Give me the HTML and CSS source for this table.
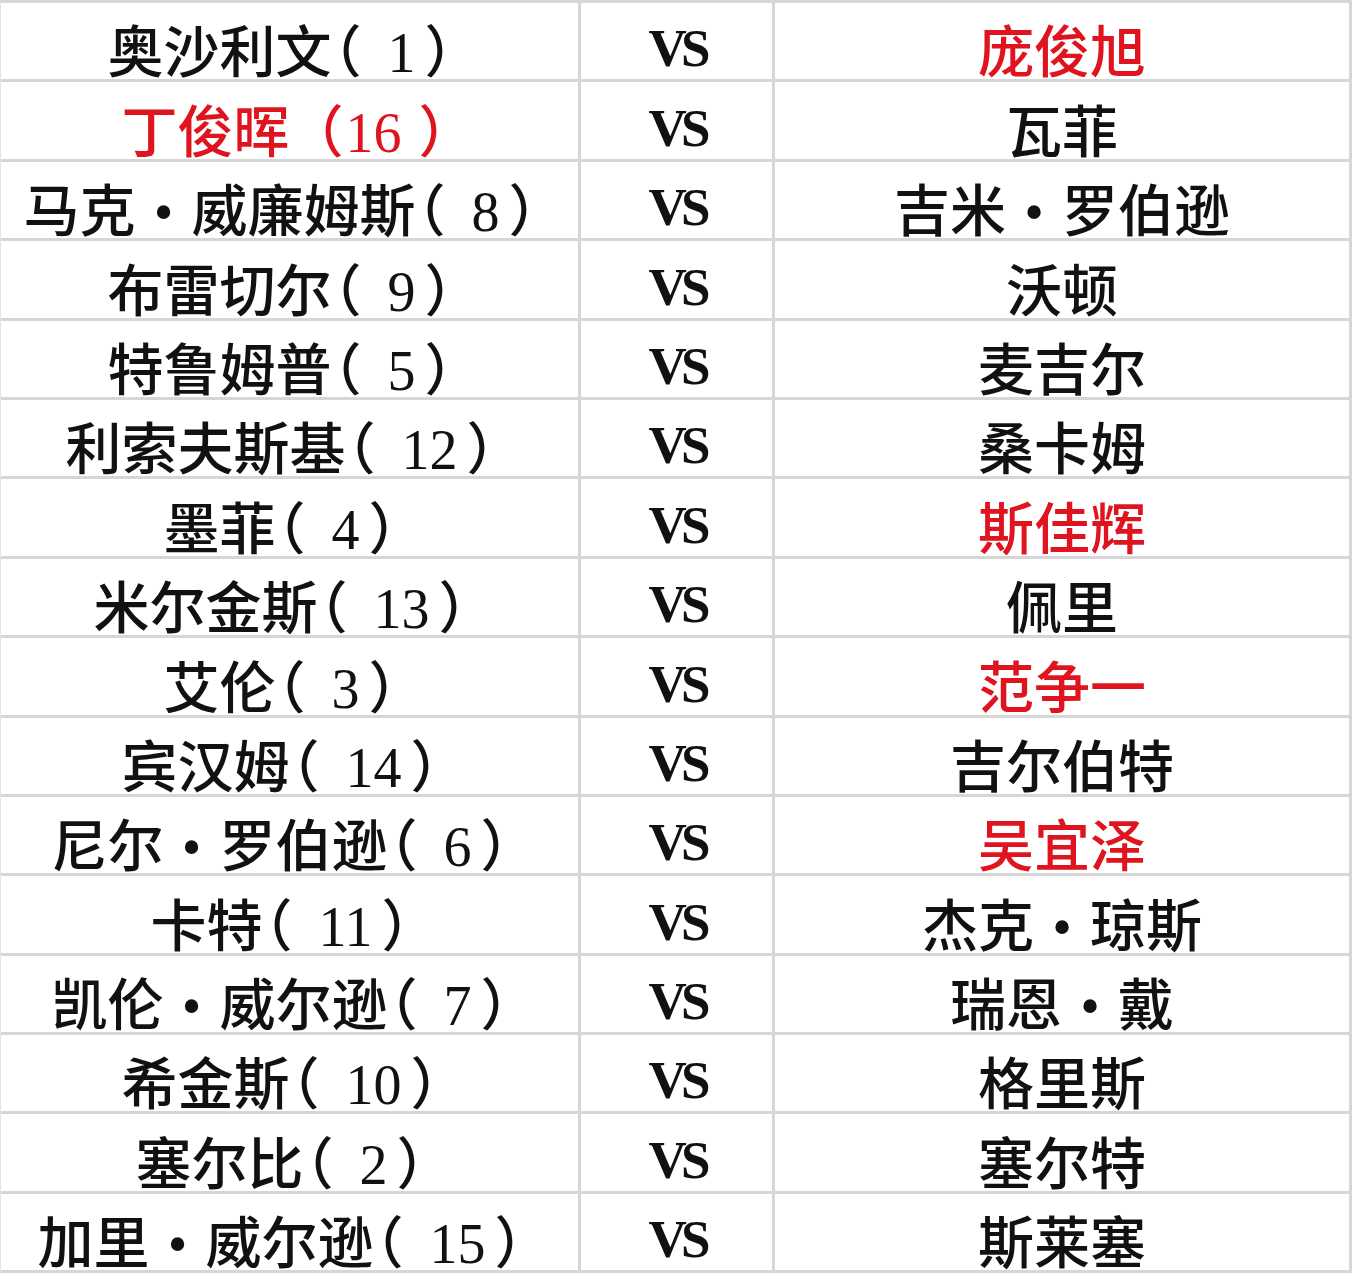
FILE: index.html
```html
<!DOCTYPE html>
<html lang="zh-CN">
<head>
<meta charset="utf-8">
<title>对阵表</title>
<link rel="stylesheet" href="styles.css">
</head>
<body>
<div class="sheet">
  <div class="cell left">奥沙利文<span class="pl">（</span>1<span class="pr">）</span></div><div class="cell mid">VS</div><div class="cell right red">庞俊旭</div>
  <div class="cell left red">丁俊晖<span class="pl alt">（</span>16<span class="pr alt">）</span></div><div class="cell mid">VS</div><div class="cell right">瓦菲</div>
  <div class="cell left">马克<span class="dot">•</span>威廉姆斯<span class="pl">（</span>8<span class="pr">）</span></div><div class="cell mid">VS</div><div class="cell right">吉米<span class="dot">•</span>罗伯逊</div>
  <div class="cell left">布雷切尔<span class="pl">（</span>9<span class="pr">）</span></div><div class="cell mid">VS</div><div class="cell right">沃顿</div>
  <div class="cell left">特鲁姆普<span class="pl">（</span>5<span class="pr">）</span></div><div class="cell mid">VS</div><div class="cell right">麦吉尔</div>
  <div class="cell left">利索夫斯基<span class="pl">（</span>12<span class="pr">）</span></div><div class="cell mid">VS</div><div class="cell right">桑卡姆</div>
  <div class="cell left">墨菲<span class="pl">（</span>4<span class="pr">）</span></div><div class="cell mid">VS</div><div class="cell right red">斯佳辉</div>
  <div class="cell left">米尔金斯<span class="pl">（</span>13<span class="pr">）</span></div><div class="cell mid">VS</div><div class="cell right">佩里</div>
  <div class="cell left">艾伦<span class="pl">（</span>3<span class="pr">）</span></div><div class="cell mid">VS</div><div class="cell right red">范争一</div>
  <div class="cell left">宾汉姆<span class="pl">（</span>14<span class="pr">）</span></div><div class="cell mid">VS</div><div class="cell right">吉尔伯特</div>
  <div class="cell left">尼尔<span class="dot">•</span>罗伯逊<span class="pl">（</span>6<span class="pr">）</span></div><div class="cell mid">VS</div><div class="cell right red">吴宜泽</div>
  <div class="cell left">卡特<span class="pl">（</span>11<span class="pr">）</span></div><div class="cell mid">VS</div><div class="cell right">杰克<span class="dot">•</span>琼斯</div>
  <div class="cell left">凯伦<span class="dot">•</span>威尔逊<span class="pl">（</span>7<span class="pr">）</span></div><div class="cell mid">VS</div><div class="cell right">瑞恩<span class="dot">•</span>戴</div>
  <div class="cell left">希金斯<span class="pl">（</span>10<span class="pr">）</span></div><div class="cell mid">VS</div><div class="cell right">格里斯</div>
  <div class="cell left">塞尔比<span class="pl">（</span>2<span class="pr">）</span></div><div class="cell mid">VS</div><div class="cell right">塞尔特</div>
  <div class="cell left">加里<span class="dot">•</span>威尔逊<span class="pl">（</span>15<span class="pr">）</span></div><div class="cell mid">VS</div><div class="cell right">斯莱塞</div>
</div>
</body>
</html>
```

FILE: styles.css
```css
html, body {
  margin: 0;
  padding: 0;
  background: #ffffff;
}

.sheet {
  display: grid;
  grid-template-columns: 580px 194px 577px;
  grid-auto-rows: 79.4px;
  width: 1351px;
  border-top: 3px solid #d6d6d6;
  border-left: 1px solid #e4e4e4;
  font-family: "Liberation Serif", "Noto Sans CJK SC", serif;
  font-size: 56px;
  font-weight: 500;
  color: #111111;
}

.cell {
  display: flex;
  align-items: flex-end;
  justify-content: center;
  border-right: 3px solid #d6d6d6;
  border-bottom: 3px solid #d6d6d6;
  line-height: 52px;
  padding-bottom: 0;
  white-space: nowrap;
}

.red {
  color: #e0141e;
}

.mid {
  font-size: 53px;
  font-weight: 700;
  letter-spacing: -6px;
  line-height: 53px;
  padding-bottom: 4px;
}

.dot {
  display: inline-block;
  width: 56px;
  text-align: center;
}

.pl,
.pr {
  display: inline-block;
  box-sizing: border-box;
  width: 56px;
  text-align: left;
  font-feature-settings: "halt" 1;
}

.pl {
  padding-left: 2px;
}

.pr {
  padding-left: 9px;
}

.pl.alt {
  padding-left: 26px;
}

.pr.alt {
  padding-left: 17px;
}
```
